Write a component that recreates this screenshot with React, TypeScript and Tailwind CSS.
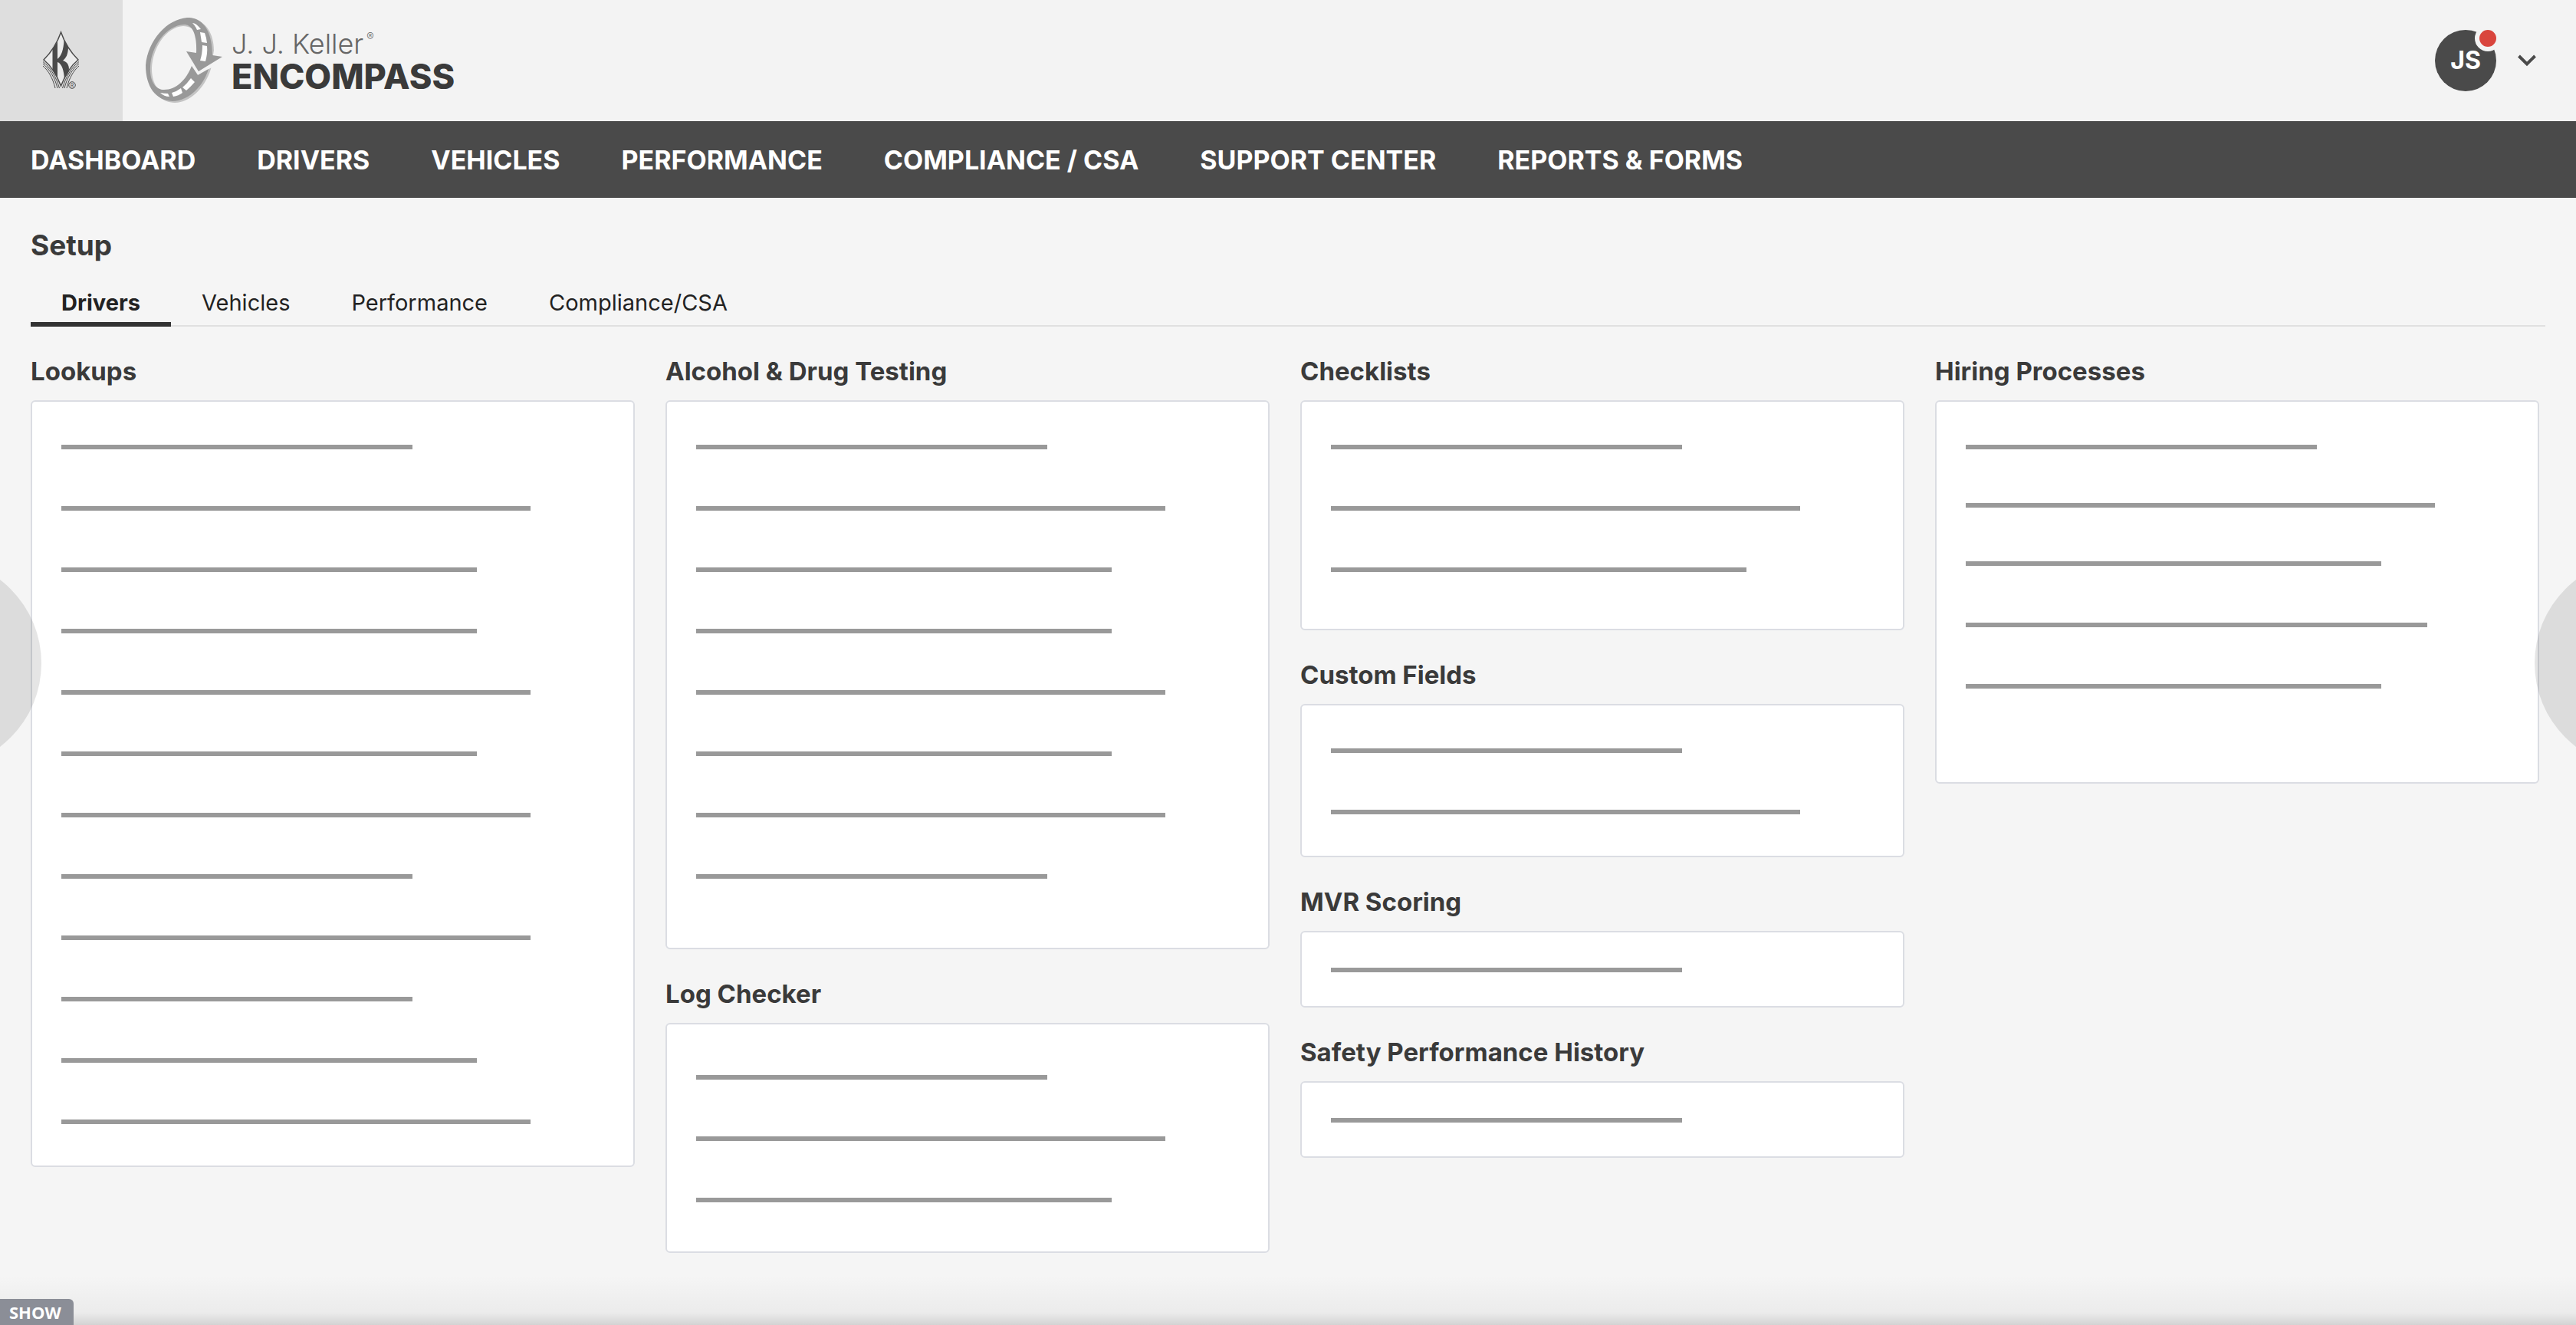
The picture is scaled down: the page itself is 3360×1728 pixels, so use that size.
const S = "w-[458px]";
const L = "w-[612px]";
const M = "w-[542px]";
const X = "w-[602px]";

type Card = { title: string; pad: string; tight?: boolean; lines: string[] };

const columns: Card[][] = [
  [{ title: "Lookups", pad: "pt-14 pb-[54px]", lines: [S, L, M, M, L, M, L, S, L, S, M, L] }],
  [
    { title: "Alcohol & Drug Testing", pad: "pt-14 pb-[90px]", lines: [S, L, M, M, L, M, L, S] },
    { title: "Log Checker", pad: "pt-[66px] pb-16", lines: [S, L, M] },
  ],
  [
    { title: "Checklists", pad: "pt-14 pb-[74px]", lines: [S, L, M] },
    { title: "Custom Fields", pad: "pt-14 pb-[54px]", lines: [S, L] },
    { title: "MVR Scoring", pad: "pt-[46px] pb-11", lines: [S] },
    { title: "Safety Performance History", pad: "pt-[46px] pb-11", lines: [S] },
  ],
  [{ title: "Hiring Processes", pad: "pt-14 pb-[122px]", tight: true, lines: [S, L, M, X, M] }],
];

const navItems = ["DASHBOARD", "DRIVERS", "VEHICLES", "PERFORMANCE", "COMPLIANCE / CSA", "SUPPORT CENTER", "REPORTS & FORMS"];
const tabs = ["Drivers", "Vehicles", "Performance", "Compliance/CSA"];

function DiamondLogo() {
  return (
    <svg viewBox="0 0 50 78" className="h-[78px] w-[50px]" fill="none" stroke="#4a4a4a" aria-hidden="true">
      <path d="M24.500 2C20 15 11 29 2 38C12 46 19 58 24.500 72C30 58 37 46 47 38C38 29 29 15 24.500 2Z" fill="#ebebeb" strokeWidth="1.500" />
      <path d="M13.500 24L20 14V37C25 33 28 25 28.500 12L34 21C34 31 31 36 27 39C34 41 36 47 34.500 54L29 63C28.500 53 26 43 20 41V61L13.500 51Z" fill="#4a4a4a" stroke="none" />
      <path d="M1 40.500C11 48 18 60 22.500 75M1 43C9.500 50 16.500 61 20 75M1 46C8 52 14 62 17 75M48 40.500C38 48 31 60 26.500 75M48 43C39.500 50 32.500 61 29 75M48 46C41 52 35 62 32 75" strokeWidth="1" />
      <circle cx="39" cy="71" r="4.300" strokeWidth="1" />
      <text x="39" y="73.500" fontSize="7" textAnchor="middle" fill="#4a4a4a" stroke="none" fontFamily="Inter, sans-serif">R</text>
    </svg>
  );
}

function RoadLogo() {
  return (
    <svg viewBox="0 0 100 112" className="h-28 w-25" aria-hidden="true">
      <path fill="#c4c4c4" fillRule="evenodd" d="M56 2C75 1 89 17 89 43L87 54L85 67C77 93 56 112 37 111C16 110 2 89 2 62C4 30 29 3 56 2ZM49 11C27 12 9 39 8 66C8 84 15 96 25 97C42 97 53 84 61 69L70 40C70 22 63 11 49 11Z" />
      <path fill="#f3f3f3" d="M53 44L60 63L68 75L86 65L89 56L69 70Z" />
      <path fill="#999" d="M54 0C73-1 87 16 87 49L100 51L69 70L53 44L66 46C67 24 62 9 50 9C27 10 7 37 6 64C5 83 13 94 24 94C40 94 53 81 60 63L68 75L82 67C75 91 54 109 35 109C13 108 0 90 0 62C3 29 28 2 54 0Z" />
      <g fill="#fff">
        <path d="M61 7Q66 7 72 15L67 16Q65 11 61 7Z" />
        <path d="M71 19L77 20Q79 25 80 33L73 32Z" />
        <path d="M74 36L80 37Q81 46 78 57L71 56Q74 47 74 36Z" />
        <path d="M59 79L64 84Q58 91 53 95L48 91Q54 86 59 79Z" />
        <path d="M46 92L48 98Q43 102 36 103L34 98Q41 96 46 92Z" />
        <path d="M19 98Q24 99 29 99L31 103Q24 103 19 98Z" />
      </g>
    </svg>
  );
}

function CardBlock({ card }: { card: Card }) {
  return (
    <section>
      <h2 className="h-20 pt-5 text-[33px] leading-11 font-bold text-[#3a3a3a]">{card.title}</h2>
      <div className={`rounded-md border-2 border-[#dbdde3] bg-white px-[38px] ${card.pad}`}>
        <ul className="flex flex-col">
          {card.lines.map((w, i) => (
            <li
              key={i}
              className={`h-1.5 max-w-full bg-[#999] ${w} ${card.tight && i < 3 ? "mt-[70px]" : "mt-[74px]"} first:mt-0`}
            />
          ))}
        </ul>
      </div>
    </section>
  );
}

export default function App() {
  return (
    <div className="relative min-h-screen overflow-hidden bg-[#f5f5f5] font-['Inter',sans-serif] text-[#222]">
      <header className="flex h-[158px] items-center bg-[#f3f3f3]">
        <a href="#home" aria-label="J. J. Keller home" className="flex h-full w-40 items-center justify-center bg-[#dedede]">
          <DiamondLogo />
        </a>
        <a href="#encompass" className="ml-[30px] flex items-center gap-3">
          <RoadLogo />
          <span className="flex flex-col">
            <span className="flex items-start text-4xl leading-[42px] font-light text-[#666]">
              J. J. Keller<span className="ml-1 text-sm leading-6">®</span>
            </span>
            <span className="text-[45px] leading-[44px] font-extrabold text-[#3a3a3a]">ENCOMPASS</span>
          </span>
        </a>
        <button type="button" className="mr-10 ml-auto flex items-center gap-4" aria-label="Account menu">
          <span className="relative flex size-20 items-center justify-center rounded-full bg-[#4a4a4a] text-[32px] font-bold text-white">
            JS
            <span className="absolute -top-1.5 -right-1.5 size-[34px] rounded-full border-6 border-[#f3f3f3] bg-[#d9453d]" />
          </span>
          <svg viewBox="0 0 48 48" className="size-12" fill="none" stroke="#4a4a4a" strokeWidth="4" aria-hidden="true">
            <path d="M13.500 18L24 28.500L34.500 18" />
          </svg>
        </button>
      </header>

      <nav className="flex h-25 items-center gap-20 bg-[#4a4a4a] px-10 text-[34px] font-bold whitespace-nowrap text-white">
        {navItems.map((n) => (
          <a key={n} href="#nav">{n}</a>
        ))}
      </nav>

      <main className="pr-12 pb-20 pl-10">
        <h1 className="h-[104px] pt-10 text-[37px] leading-[44px] font-bold text-[#3a3a3a]">Setup</h1>
        <div role="tablist" className="-mr-2 flex h-16 border-b-2 border-[#e0e0e0] text-[29px]">
          {tabs.map((t, i) => (
            <button
              key={t}
              type="button"
              role="tab"
              aria-selected={i === 0}
              className={i === 0 ? "-mb-0.5 border-b-6 border-[#333] px-10 pt-2 font-bold" : "px-10 pt-1"}
            >
              {t}
            </button>
          ))}
        </div>
        <div className="mt-4 grid grid-cols-4 items-start gap-10">
          {columns.map((col, i) => (
            <div key={i} className="flex flex-col gap-4">
              {col.map((c) => (
                <CardBlock key={c.title} card={c} />
              ))}
            </div>
          ))}
        </div>
      </main>

      <button type="button" aria-label="Previous" className="absolute top-[728px] -left-[220px] size-[274px] rounded-full bg-black/10" />
      <button type="button" aria-label="Next" className="absolute top-[728px] -right-[220px] size-[274px] rounded-full bg-black/10" />
      <div className="pointer-events-none absolute right-0 bottom-0 left-0 h-16 bg-linear-to-t from-black/14 via-black/4 via-25% to-transparent" />
      <button type="button" className="absolute bottom-0 left-0 h-[34px] w-24 rounded-tr-md bg-[#8b8e97] pl-3 text-left font-['Open_Sans',sans-serif] text-[22px] leading-[34px] font-bold text-white">
        SHOW
      </button>
    </div>
  );
}
